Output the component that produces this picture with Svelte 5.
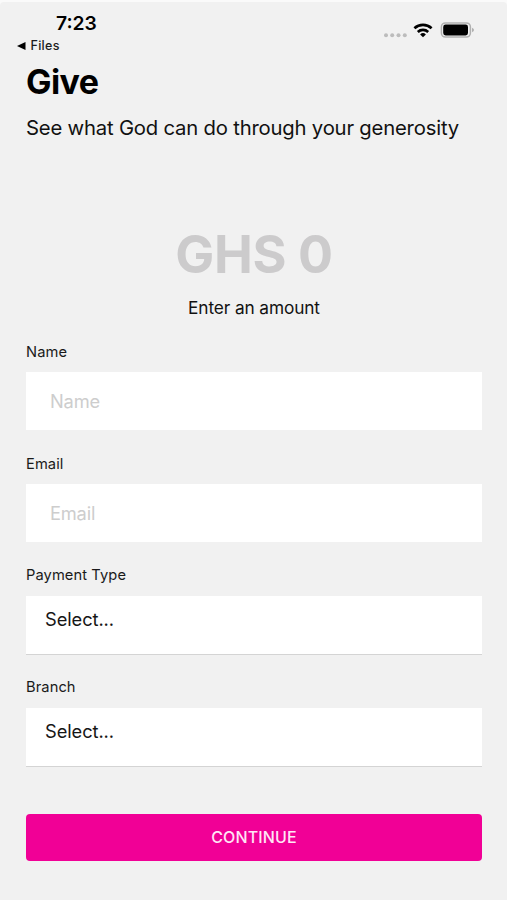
<script>
  const textFields = [
    { id: 'name', label: 'Name' },
    { id: 'email', label: 'Email' }
  ];
  const selects = [
    { id: 'type', label: 'Payment Type' },
    { id: 'branch', label: 'Branch' }
  ];
</script>

<div class="frame">
  <main class="screen">
    <header class="status">
      <div class="left">
        <div class="time">7:23</div>
        <div class="back">
          <svg width="9" height="8" viewBox="0 0 9 8"><path d="M0 4 8.5 0v8z" /></svg>
          <span>Files</span>
        </div>
      </div>
      <div class="indicators">
        <svg width="92" height="20" viewBox="0 0 92 20">
          <g fill="#bcbcbc">
            <circle cx="3" cy="15.3" r="2" />
            <circle cx="9.2" cy="15.3" r="2" />
            <circle cx="15.5" cy="15.3" r="2" />
            <circle cx="21.8" cy="15.3" r="2" />
          </g>
          <g fill="none" stroke="#000" stroke-width="2.7">
            <path d="M31.4 8.2a13 13 0 0 1 17.2 0" />
            <path d="M34.8 11.9a7.8 7.8 0 0 1 10.4 0" />
          </g>
          <path d="M40 17.3l-2.9-2.8a4.2 4.2 0 0 1 5.8 0z" />
          <rect x="58.4" y="2.9" width="29" height="14.2" rx="4" fill="#f1f1f1" stroke="#b0b0b0" stroke-width="1.5" />
          <rect x="60.2" y="4.5" width="24.8" height="11" rx="2.4" />
          <path d="M89 7.8v4.4q2-.7 2-2.2t-2-2.2z" fill="#b0b0b0" />
        </svg>
      </div>
    </header>

    <h1>Give</h1>
    <p class="subtitle">See what God can do through your generosity</p>

    <section class="amount">
      <div class="value">GHS 0</div>
      <div class="hint">Enter an amount</div>
    </section>

    <form>
      {#each textFields as f}
        <div class="group">
          <label for={f.id}>{f.label}</label>
          <input id={f.id} type="text" placeholder={f.label} />
        </div>
      {/each}
      {#each selects as s}
        <div class="group select-group">
          <div class="label">{s.label}</div>
          <div class="select">Select...</div>
        </div>
      {/each}
      <button type="button">CONTINUE</button>
    </form>
  </main>
</div>

<style>
  :global(body) { margin: 0; background: #fff; }
  .frame {
    box-sizing: border-box;
    height: 900px;
    padding-top: 2px;
    background: #fafafa;
    overflow: hidden;
    font-family: Inter, "Liberation Sans", sans-serif;
    color: #000;
  }
  .screen {
    box-sizing: border-box;
    height: 898px;
    padding: 0 25px 0 26px;
    background: #f1f1f1;
    border-radius: 4px 4px 0 0;
    white-space: nowrap;
  }
  .status { display: flex; justify-content: space-between; height: 60px; }
  .left { margin-left: -9px; }
  .time {
    margin-left: 39px;
    padding-top: 9px;
    font-size: 19.3px;
    font-weight: 600;
    line-height: 24px;
  }
  .back { display: flex; align-items: center; height: 20px; margin-top: 0.5px; font-size: 12.5px; font-weight: 500; color: #1c1c1c; letter-spacing: 0.3px; }
  .back svg { margin-right: 4.5px; fill: #000; }
  .indicators { padding-top: 18px; margin-right: 7px; }
  .indicators svg { display: block; }
  h1 { margin: 0; font-size: 34px; font-weight: 700; line-height: 40px; letter-spacing: -0.6px; }
  .subtitle { margin: 11px 0 0; font-size: 20.3px; line-height: 30px; letter-spacing: -0.2px; color: #111; }
  .amount { display: flex; flex-direction: column; align-items: center; padding-top: 82px; }
  .value { font-size: 52px; font-weight: 700; line-height: 60px; letter-spacing: -0.4px; color: #cccbcc; }
  .hint { margin-top: 13px; font-size: 17.3px; line-height: 20px; letter-spacing: -0.12px; color: #111; }
  form { padding-top: 24px; }
  .group { height: 111.5px; }
  .select-group { height: 112px; }
  label, .label { display: block; height: 30.4px; font-size: 14.7px; line-height: 21px; letter-spacing: 0.08px; color: #1a1a1a; }
  label { height: 30px; }
  .label { height: 31px; }
  input {
    display: block;
    box-sizing: border-box;
    width: 100%;
    height: 58px;
    padding: 0;
    padding-left: 24px;
    border: 0;
    border-radius: 0;
    background: #fff;
    font: 400 18.3px/22px Inter, "Liberation Sans", sans-serif;
    letter-spacing: -0.2px;
    outline: none;
  }
  input::placeholder { color: #cdcdcd; opacity: 1; }
  .select {
    box-sizing: border-box;
    height: 59px;
    padding: 11px 19px;
    border-bottom: 1.5px solid #d4d4d4;
    background: #fff;
    font-size: 18.3px;
    line-height: 24px;
    letter-spacing: -0.08px;
    color: #161616;
  }
  button {
    display: block;
    width: 100%;
    height: 47px;
    margin-top: 25px;
    padding: 0;
    border: 0;
    border-radius: 4px;
    background: #f10096;
    color: #ffe6f5;
    font: 500 16px/47px Inter, "Liberation Sans", sans-serif;
    letter-spacing: 0.15px;
  }
</style>
